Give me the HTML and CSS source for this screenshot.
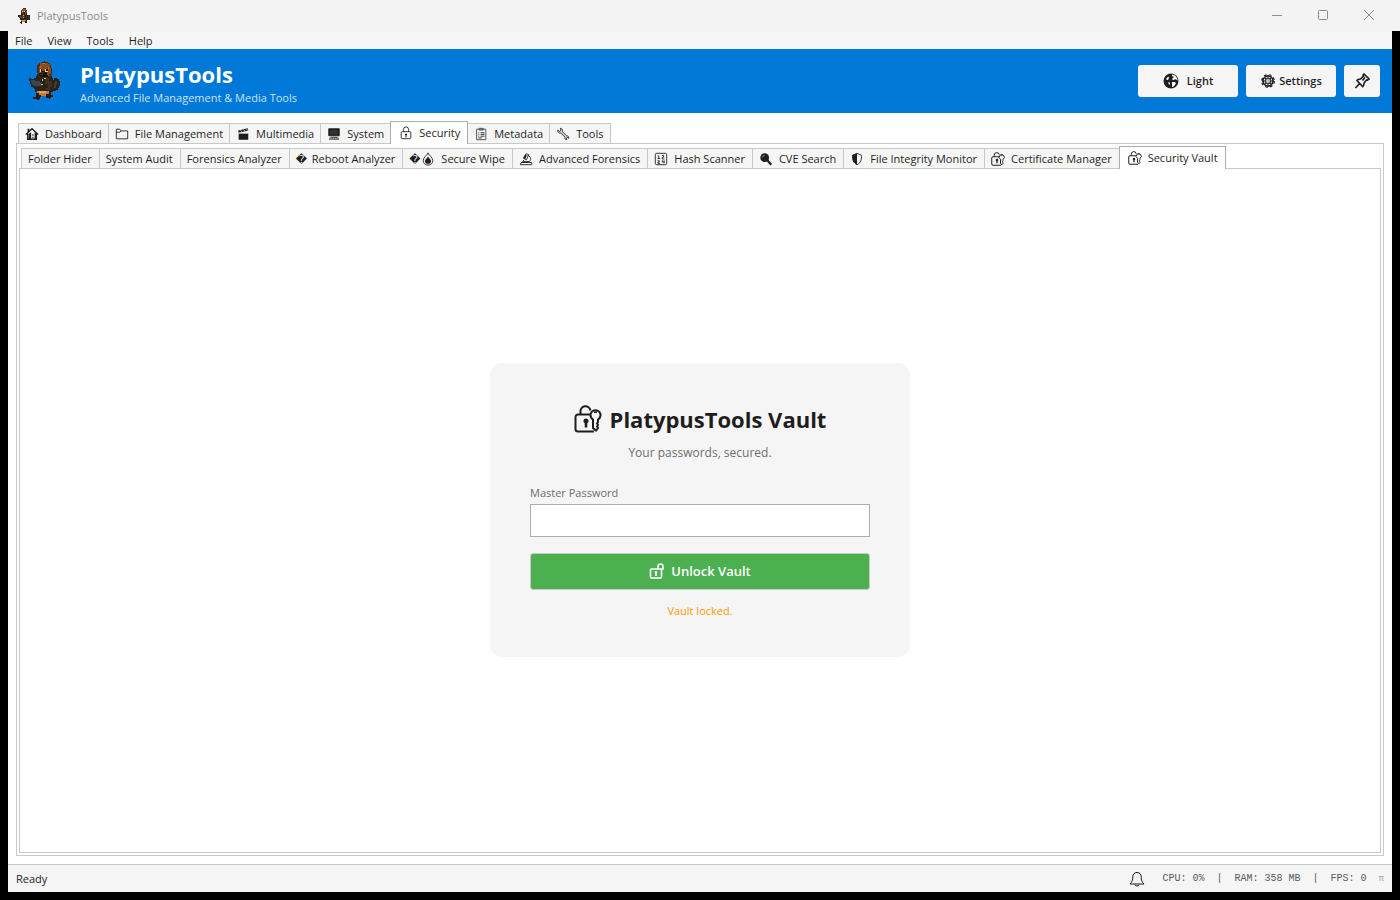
FILE: index.html
```
<!DOCTYPE html>
<html lang="en">
<head>
    <meta charset="UTF-8">
    <meta name="viewport" content="width=device-width, initial-scale=1.0">
    <title>PlatypusTools</title>
    <link rel="stylesheet" href="styles.css">
</head>
<body>
    <svg class="sprite" aria-hidden="true">
        <symbol id="platypus" viewBox="0 0 32 40">
            <g shape-rendering="crispEdges">
                <path fill="#2b2119" d="M22 22h2v-3h2v-2h3v1h2v2h1v5h-1v2h-1v2h-2v1h-3v1h-4z"/>
                <path fill="#463a2c" d="M25 22h2v-2h2v4h-1v3h-3v1h-2v-3h2z"/>
                <path fill="#2a221b" d="M9 13h13v2h2v2h1v3h1v8h-1v2h-2v2H9v-1H7v-3H6V17h2v-2h1z"/>
                <path fill="#3b3128" d="M17 17h4v3h3v6h-2v3h-5v-2h3v-4h-3z"/>
                <path fill="#4a2b14" d="M11 2h2V1h3V0h1v1h3v1h2v2h1v3h1v7h-1v2h-3v1h-9v-2h-1v-3h-1V4h1z"/>
                <path fill="#8a4c20" d="M12 2h8v1h2v4h1v6h-2v2h-9v-2h-1V5h1z"/>
                <path fill="#b26c32" d="M14 2h3v1h-3zM20 6h1v3h-1zM12 5h1v2h-1z"/>
                <path fill="#efd09a" d="M12 8h2v3h-2zM17 8h3v3h-3z"/>
                <path fill="#1b1512" d="M13 8h1v2h-1zM18 8h2v2h-2zM13 10h4v1h2v3h1v2h-8v-1h-1v-3h2z"/>
                <path fill="#40372e" d="M13 11h3v1h-3zM12 13h3v1h-3z"/>
                <path fill="#25262a" d="M1 17h2v1h5v1h5v2h1v6H5v-1H3v-3H2v-3H1z"/>
                <path fill="#41444a" d="M3 19h4v1h5v1h1v4H6v-1H4v-2H3z"/>
                <path fill="#d4bd86" d="M14 18h1v2h-1zM16 17h2v1h-2zM13 23h2v1h-2z"/>
                <path fill="#c87b35" d="M9 30h12v3h-2v2h-8v-2H9z"/>
                <path fill="#e9a34d" d="M11 30h7v2h-7z"/>
                <path fill="#251c17" d="M8 32h3v2h2v2h-1v2h-1v1H9v-1H5v-2h3zM18 33h3v-1h2v2h2v2h-2v1h-1v1h-1v-1h-3z"/>
            </g>
        </symbol>
        <symbol id="home" viewBox="0 0 16 16">
            <path d="M1 8.500 8 2l7 6.500M3 7v7h10V7" fill="none" stroke="currentColor" stroke-width="1.500"/>
            <path d="M3 2h2v3L3 7zM4 8l3-2v8H4zM11 6l2 2v6h-2z"/>
            <path d="M8 8h2v2H8zM8 11h2v3H8z" fill="#777"/>
        </symbol>
        <symbol id="folder" viewBox="0 0 16 16">
            <path d="M1.500 13.500v-11h4l1.500 2h7.500v9zM1.500 6h4l1.500-1.500" fill="none" stroke="currentColor"/>
        </symbol>
        <symbol id="clapper" viewBox="0 0 16 16">
            <path d="M3 7h11v7.500H3zM2.500 4 13.500 1.500l.5 2.500L3 6.500z"/>
            <path d="m5 3.500 1.500 2M8.500 2.800l1.500 2M12 2l1.200 2M3 7.200h11" stroke="#f5f5f5" stroke-width=".8"/>
        </symbol>
        <symbol id="computer" viewBox="0 0 16 16">
            <path d="M2 2h12v8H2z" stroke="currentColor"/>
            <path d="M3.500 3.500h9v5h-9z" fill="#333"/>
            <path d="M4 11h8v1H4zM3 12l-1 2.500h12L13 12z" fill="#555"/>
            <path d="M3 13h10" stroke="#ccc" stroke-dasharray="1 1"/>
        </symbol>
        <symbol id="lock" viewBox="0 0 16 16">
            <path d="M3.500 6.500h9a1 1 0 0 1 1 1v6a1 1 0 0 1-1 1h-9a1 1 0 0 1-1-1v-6a1 1 0 0 1 1-1zM5 6.500V4a3 3 0 0 1 6 0v2.500" fill="none" stroke="currentColor"/>
            <path d="M8 8.500a1.200 1.200 0 0 1 .6 2.200V13H7.400v-2.300A1.200 1.200 0 0 1 8 8.500z"/>
        </symbol>
        <symbol id="lock-key" viewBox="0 0 28 28">
            <g fill="none" stroke="currentColor" stroke-width="2">
                <path d="M20 26.500H4A2.500 2.500 0 0 1 1.500 24V12A2.500 2.500 0 0 1 4 9.500h12M6.500 9.500V7a5 5 0 0 1 10-1.500"/>
                <path d="M19 14.500a5 5 0 1 1 5 0V17l-1 1.500 1 1.500-1 1.500 1 1.500-2 2.500-3-2.500z"/>
            </g>
            <path d="M20 6.500h3v1.500h-3zM12 13.500a2.500 2.500 0 0 1 1.300 4.700v4.300h-2.600v-4.300a2.500 2.500 0 0 1 1.300-4.700z"/>
        </symbol>
        <symbol id="unlock" viewBox="0 0 16 16">
            <path d="M2.500 6h9a1 1 0 0 1 1 1v7a1 1 0 0 1-1 1h-9a1 1 0 0 1-1-1V7a1 1 0 0 1 1-1zM9 6V3.500a2.500 2.500 0 0 1 5 0V6h-1.500" fill="none" stroke="currentColor" stroke-width="1.600"/>
            <path d="M7 8a1.400 1.400 0 0 1 .8 2.500v2.500H6.200v-2.500A1.400 1.400 0 0 1 7 8z"/>
        </symbol>
        <symbol id="clipboard" viewBox="0 0 16 16">
            <path d="M3 2.500h10.500v12H3zM6 1.500h4.500v2H6z" fill="none" stroke="#444"/>
            <path d="M5 6.500h1M7.500 6.500H12M5 8.500h1M7.500 8.500H12M5 10.500h1M7.500 10.500H12M5 12.500h4" stroke="currentColor"/>
        </symbol>
        <symbol id="wrench" viewBox="0 0 16 16">
            <path d="M2 3.500 4 5l1.500-1L5 1.500C7 1.500 8 3.500 7.300 5.500l5 4.700c1.700-.3 2.700 1.200 2.200 2.800l-1.500-1-1.200.8.2 1.800c-1.700-.2-2.200-1.700-1.600-2.900L5.500 7C3.500 7.500 1.500 6 2 3.500z" fill="#ddd" stroke="currentColor"/>
        </symbol>
        <symbol id="drop" viewBox="0 0 16 16">
            <path d="M8 1c1 3 5.500 5 5.500 9a5.500 5 0 0 1-11 0C2.500 6 7 4 8 1z" fill="none" stroke="currentColor"/>
            <path d="M8 5c.5 1.800 3.500 3 3.500 5.200a3.500 3.200 0 0 1-7 0C4.500 8 7.500 6.800 8 5z"/>
        </symbol>
        <symbol id="microscope" viewBox="0 0 16 16">
            <path d="m5 7 3-5 3 1-2.500 6zM10 4c3 .5 4.500 4 2 7H4l2-2M1.500 14.500h13V12h-12z" fill="none" stroke="currentColor"/>
            <path d="m7 3 2 1-2 4-2-1zM4 11h7v1H4z"/>
        </symbol>
        <symbol id="numbers" viewBox="0 0 16 16">
            <rect x="1.500" y="1.500" width="13" height="13" rx="1.500" fill="none" stroke="currentColor"/>
            <path d="M4 4.500h1.500V8M4 7.500h3M9 4h2v2H9.500v2H12M4 10h2v1.500H4.500V13H7M9.500 9.500v2H12M11.500 9.500V13" fill="none" stroke="currentColor"/>
        </symbol>
        <symbol id="magnifier" viewBox="0 0 16 16">
            <circle cx="6.500" cy="6.500" r="5"/>
            <path d="m9.500 9.500 4.500 5" stroke="currentColor" stroke-width="2.600"/>
            <path d="M4 6A2.500 2.500 0 0 1 6.500 4" fill="none" stroke="#999"/>
        </symbol>
        <symbol id="shield" viewBox="0 0 16 16">
            <path d="M8 1.500c2 1 3.500 1.500 5 2 .8 5-1 9-5 11-4-2-5.800-6-5-11 1.500-.5 3-1 5-2z" fill="none" stroke="currentColor"/>
            <path d="M8 1.500v13c-4-2-5.800-6-5-11 1.500-.5 3-1 5-2z"/>
        </symbol>
        <symbol id="globe" viewBox="0 0 16 16">
            <circle cx="8" cy="8" r="7.500"/>
            <path d="M9 1.500c3.500.5 5.500 3 5.500 6L12 6l-1 1H9.500V5L11 4 9 3zM9 9h2.500l1.500 1-1 2-2 2H9V9zM3.500 5l2-1.500L6 5 5 7H3.500z" fill="#f5f5f5"/>
            <path d="M5 9.500h2v2H6z" fill="#f5f5f5"/>
        </symbol>
        <symbol id="gear" viewBox="0 0 16 16">
            <circle cx="8" cy="8" r="5" fill="none" stroke="currentColor" stroke-width="1.600"/>
            <circle cx="8" cy="8" r="6.300" fill="none" stroke="currentColor" stroke-width="1.200" stroke-dasharray="2.800 2.150"/>
            <circle cx="8" cy="8" r="2.800" fill="#bbb" stroke="currentColor"/>
            <path d="M8 2v3M8 11v3M2 8h3M11 8h3M4 4l2 2M10 10l2 2M12 4l-2 2M6 10l-2 2" stroke="currentColor"/>
        </symbol>
        <symbol id="pin" viewBox="0 0 16 16">
            <path d="m10 1 5 5-1.500 1.200-1-.3L10 10l-.3 2.500-1 1L3 7.500l1-1L6.500 6l3-2.800-.5-1zM6 10l-4.500 5M8.500 7.500l2.500-3" fill="none" stroke="currentColor" stroke-width="1.600"/>
        </symbol>
        <symbol id="bell" viewBox="0 0 16 16">
            <path d="M8 1.500c3 0 4.200 2 4.200 4.500 0 3 .8 5 2.800 7H1c2-2 2.800-4 2.800-7C3.800 3.500 5 1.500 8 1.500zM6 13.500a2 1.500 0 0 0 4 0M8 1v1" fill="none" stroke="currentColor"/>
        </symbol>
    </svg>

    <div class="titlebar">
        <svg class="app-icon"><use href="#platypus"/></svg>
        <span class="app-name">PlatypusTools</span>
        <div class="window-buttons">
            <button aria-label="Minimize"><svg viewBox="0 0 12 12"><path d="M1 5.500h10"/></svg></button>
            <button aria-label="Maximize"><svg viewBox="0 0 12 12"><rect x="1.500" y=".5" width="9" height="9" rx="1"/></svg></button>
            <button aria-label="Close"><svg viewBox="0 0 12 12"><path d="m1 0 10 10M11 0 1 10"/></svg></button>
        </div>
    </div>

    <div class="window">
        <nav class="menu">
            <a href="#">File</a>
            <a href="#">View</a>
            <a href="#">Tools</a>
            <a href="#">Help</a>
        </nav>

        <header>
            <svg class="logo"><use href="#platypus"/></svg>
            <div class="brand">
                <h1>PlatypusTools</h1>
                <p>Advanced File Management &amp; Media Tools</p>
            </div>
            <div class="header-buttons">
                <button class="btn-theme"><svg class="icon"><use href="#globe"/></svg>Light</button>
                <button class="btn-settings"><svg class="icon"><use href="#gear"/></svg>Settings</button>
                <button class="btn-pin" aria-label="Pin"><svg class="icon"><use href="#pin"/></svg></button>
            </div>
        </header>

        <main>
            <div class="tabs">
                <button class="tab"><svg class="icon"><use href="#home"/></svg>Dashboard</button>
                <button class="tab"><svg class="icon"><use href="#folder"/></svg>File Management</button>
                <button class="tab"><svg class="icon"><use href="#clapper"/></svg>Multimedia</button>
                <button class="tab"><svg class="icon"><use href="#computer"/></svg>System</button>
                <button class="tab active"><svg class="icon"><use href="#lock"/></svg>Security</button>
                <button class="tab"><svg class="icon"><use href="#clipboard"/></svg>Metadata</button>
                <button class="tab"><svg class="icon"><use href="#wrench"/></svg>Tools</button>
            </div>
            <div class="panel">
                <div class="tabs sub-tabs">
                    <button class="tab">Folder Hider</button>
                    <button class="tab">System Audit</button>
                    <button class="tab">Forensics Analyzer</button>
                    <button class="tab"><span class="glyph">&#xFFFD;</span>Reboot Analyzer</button>
                    <button class="tab"><span class="glyph">&#xFFFD;</span><svg class="icon"><use href="#drop"/></svg>Secure Wipe</button>
                    <button class="tab"><svg class="icon"><use href="#microscope"/></svg>Advanced Forensics</button>
                    <button class="tab"><svg class="icon"><use href="#numbers"/></svg>Hash Scanner</button>
                    <button class="tab"><svg class="icon"><use href="#magnifier"/></svg>CVE Search</button>
                    <button class="tab"><svg class="icon"><use href="#shield"/></svg>File Integrity Monitor</button>
                    <button class="tab"><svg class="icon"><use href="#lock-key"/></svg>Certificate Manager</button>
                    <button class="tab active"><svg class="icon"><use href="#lock-key"/></svg>Security Vault</button>
                </div>
                <div class="panel vault">
                    <form class="vault-card">
                        <h2><svg class="vault-icon"><use href="#lock-key"/></svg>PlatypusTools Vault</h2>
                        <p class="subtitle">Your passwords, secured.</p>
                        <label for="master-password">Master Password</label>
                        <input type="password" id="master-password">
                        <button type="button" class="btn-unlock"><svg class="icon"><use href="#unlock"/></svg>Unlock Vault</button>
                        <p class="status">Vault locked.</p>
                    </form>
                </div>
            </div>
        </main>

        <footer>
            <span>Ready</span>
            <div class="stats">
                <svg class="icon"><use href="#bell"/></svg>
                <span>CPU: 0%</span>
                <span class="divider">|</span>
                <span>RAM: 358 MB</span>
                <span class="divider">|</span>
                <span>FPS: 0</span>
                <span class="pi">π</span>
            </div>
        </footer>
    </div>
</body>
</html>
```
FILE: styles.css
```
* {
    box-sizing: border-box;
}

body, h1, h2, p {
    margin: 0;
}

body {
    display: flex;
    flex-direction: column;
    min-height: 100vh;
    background: #000;
    color: #1e1e1e;
    font-family: 'Open Sans', sans-serif;
    font-size: 11px;
    line-height: 16px;
}

button, input {
    font: inherit;
    color: inherit;
}

.sprite {
    display: none;
}

.icon {
    width: 16px;
    height: 16px;
    flex: none;
    fill: currentColor;
}

/* Title bar */
.titlebar {
    display: flex;
    align-items: center;
    height: 31px;
    padding-left: 16px;
    background: #f3f3f3;
    color: #8c8c8c;
}

.app-icon {
    width: 16px;
    height: 16px;
    margin-right: 5px;
}

.window-buttons {
    display: flex;
    margin-left: auto;
    padding-right: 8px;
}

.window-buttons button {
    width: 46px;
    height: 31px;
    padding: 0;
    border: none;
    background: none;
}

.window-buttons svg {
    display: block;
    width: 12px;
    height: 12px;
    margin: 0 auto;
    fill: none;
    stroke: #8c8c8c;
}

.window {
    display: flex;
    flex-direction: column;
    flex: 1;
    margin: 0 8px 8px;
    background: #fff;
}

/* Menu */
.menu {
    display: flex;
    gap: 15px;
    height: 18px;
    padding: 2px 7px 0;
    background: #f5f5f5;
}

.menu a {
    color: inherit;
    text-decoration: none;
}

/* Header */
header {
    display: flex;
    align-items: center;
    height: 64px;
    padding: 0 12px 0 20px;
    background: #0078d7;
    color: #fff;
}

.logo {
    width: 32px;
    height: 40px;
    margin-right: 20px;
}

.brand {
    padding-top: 4px;
}

.brand h1 {
    margin-bottom: 2px;
    font-size: 22px;
    line-height: 28px;
}

.brand p {
    color: #cce4f7;
}

.header-buttons {
    display: flex;
    gap: 8px;
    margin-left: auto;
    color: #1e1e1e;
}

.header-buttons button {
    display: flex;
    align-items: center;
    justify-content: center;
    height: 32px;
    padding: 0;
    border: none;
    border-radius: 3px;
    background: #f5f5f5;
    font-weight: 600;
}

.btn-theme {
    width: 100px;
    gap: 8px;
}

.btn-settings {
    width: 90px;
    gap: 3px;
}

.btn-pin {
    width: 36px;
}

/* Tabs */
main {
    display: flex;
    flex-direction: column;
    flex: 1;
    padding: 8px;
}

.tabs {
    display: flex;
    align-items: flex-end;
    height: 22px;
    padding: 0 2px;
}

.tab {
    display: flex;
    align-items: center;
    gap: 6px;
    height: 21px;
    margin: 0 -1px -1px 0;
    padding: 0 6px;
    border: 1px solid #c8c8c8;
    background: #f5f5f5;
    white-space: nowrap;
}

.tab .icon {
    width: 14px;
    height: 14px;
}

.sub-tabs .tab {
    padding: 0 7px 0 6px;
}

.tabs .tab.active {
    position: relative;
    height: 23px;
    padding: 0 7px 0 8px;
    border-color: #acacac;
    border-bottom: none;
    background: #fff;
}

.glyph {
    width: 10px;
    padding-top: 2px;
    font-family: 'DejaVu Sans', sans-serif;
}

.glyph + .icon {
    margin-left: -4px;
}

.panel {
    display: flex;
    flex-direction: column;
    flex: 1;
    padding: 2px;
    border: 1px solid #c8c8c8;
}

/* Vault */
.vault {
    align-items: center;
    justify-content: center;
    padding-bottom: 4px;
}

.vault-card {
    display: flex;
    flex-direction: column;
    width: 420px;
    padding: 40px 40px 38px;
    border-radius: 12px;
    background: #f5f5f5;
}

.vault-card h2 {
    display: flex;
    align-items: center;
    justify-content: center;
    gap: 8px;
    font-size: 22px;
    line-height: 32px;
}

.vault-icon {
    width: 28px;
    height: 28px;
    fill: currentColor;
}

.subtitle {
    margin: 10px 0 24px;
    color: #6e6e6e;
    font-size: 12px;
    text-align: center;
}

.vault-card label {
    margin-bottom: 3px;
    color: #6e6e6e;
}

.vault-card input {
    height: 33px;
    padding: 0 8px;
    border: 1px solid #abadb3;
    background: #fff;
}

.btn-unlock {
    display: flex;
    align-items: center;
    justify-content: center;
    gap: 6px;
    height: 37px;
    margin: 16px 0 13px;
    border: 1px solid #c8c8c8;
    border-radius: 3px;
    background: #4caf50;
    font-size: 13px;
    font-weight: 600;
}

.vault-card .btn-unlock {
    color: #fff;
}

.status {
    color: #ff9800;
    text-align: center;
}

/* Status bar */
footer {
    display: flex;
    align-items: center;
    justify-content: space-between;
    height: 28px;
    padding: 0 8px;
    border-top: 1px solid #c8c8c8;
    background: #f5f5f5;
}

.stats {
    display: flex;
    align-items: center;
    gap: 12px;
    color: #5a5a5a;
    font-family: 'Liberation Mono', monospace;
    font-size: 10px;
}

.stats .icon {
    margin-right: 6px;
    color: #1e1e1e;
}

.pi {
    color: #aaa;
    font-size: 9px;
}
```
